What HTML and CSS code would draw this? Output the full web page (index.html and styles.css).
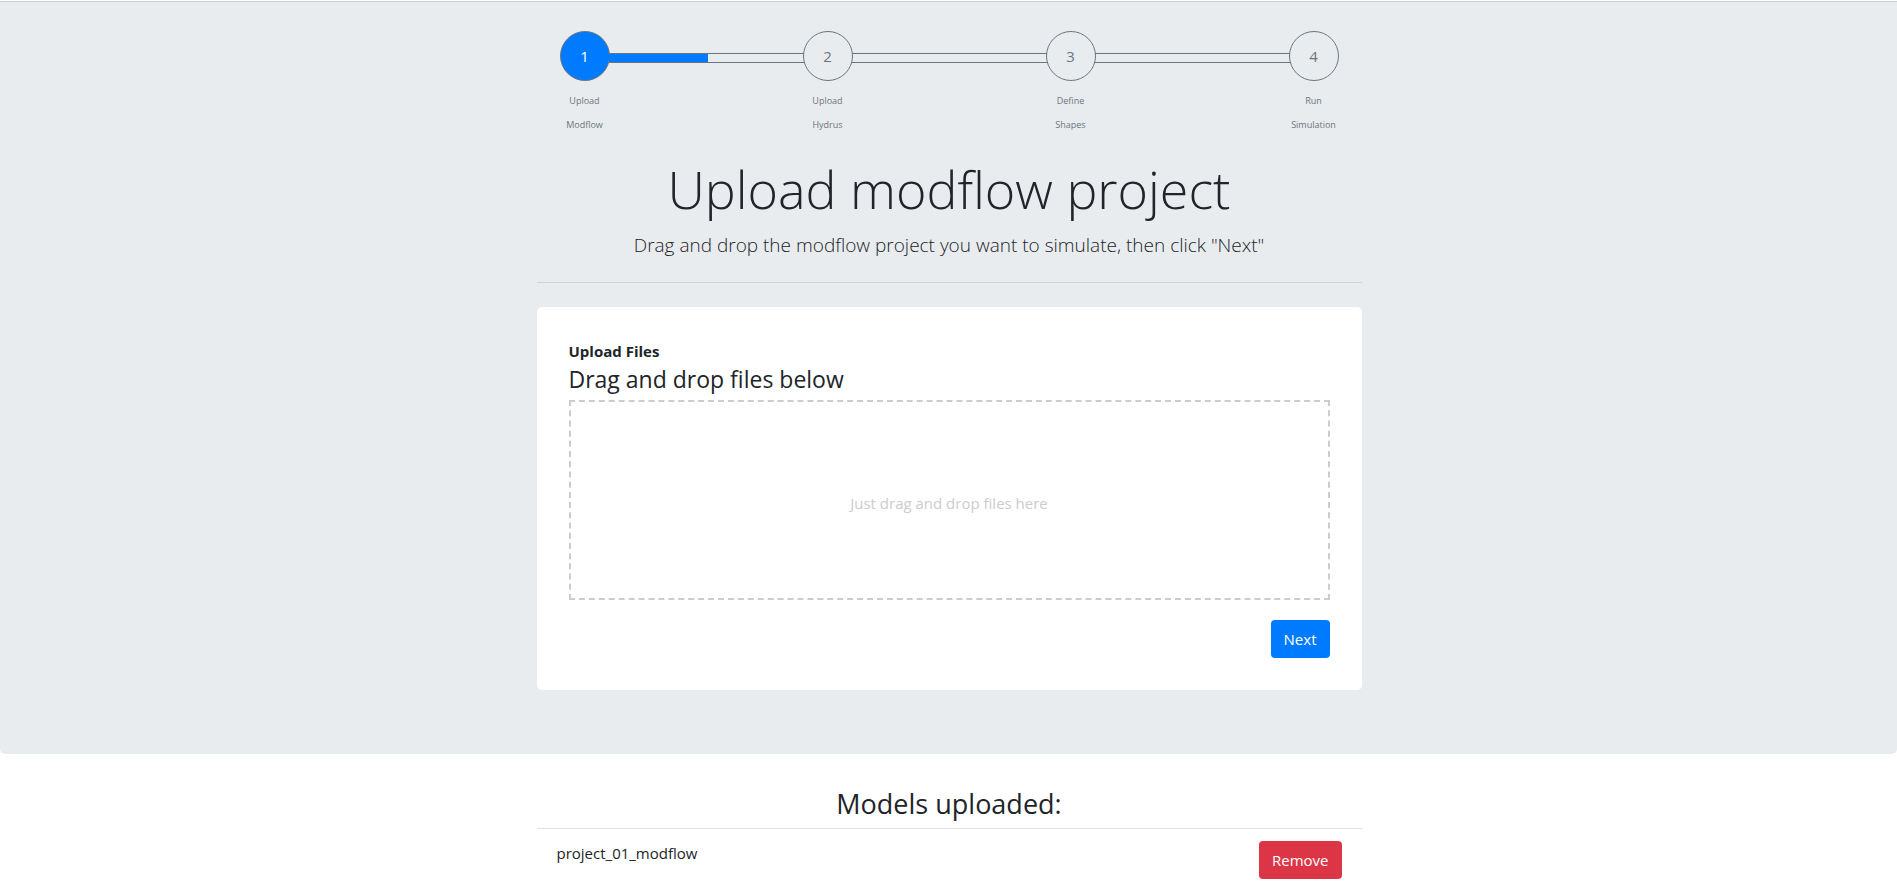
FILE: index.html
```html
<!DOCTYPE html>
<html lang="en">
<head>
<meta charset="utf-8">
<meta name="viewport" content="width=device-width, initial-scale=1">
<title>Upload modflow project</title>
<link rel="stylesheet" href="styles.css">
</head>
<body>
<main>
  <section class="jumbotron">
    <div class="container">
      <ol class="steps">
        <li class="step step-active"><span class="circle">1</span><span class="label">Upload</span><span class="label">Modflow</span></li>
        <li class="bar" aria-hidden="true"><div class="bar-fill" style="width: 51%"></div></li>
        <li class="step"><span class="circle">2</span><span class="label">Upload</span><span class="label">Hydrus</span></li>
        <li class="bar" aria-hidden="true"></li>
        <li class="step"><span class="circle">3</span><span class="label">Define</span><span class="label">Shapes</span></li>
        <li class="bar" aria-hidden="true"></li>
        <li class="step"><span class="circle">4</span><span class="label">Run</span><span class="label">Simulation</span></li>
      </ol>
      <h1 class="title">Upload modflow project</h1>
      <p class="lead">Drag and drop the modflow project you want to simulate, then click "Next"</p>
      <hr class="divider">
      <div class="card">
        <div class="card-name">Upload Files</div>
        <h2 class="card-title">Drag and drop files below</h2>
        <div class="dropzone">Just drag and drop files here</div>
        <div class="actions"><button class="btn btn-primary" type="button">Next</button></div>
      </div>
    </div>
  </section>
  <section class="models">
    <div class="container">
      <h2 class="models-title">Models uploaded:</h2>
      <ul class="model-list">
        <li class="model">
          <span class="model-name">project_01_modflow</span>
          <button class="btn btn-danger" type="button">Remove</button>
        </li>
      </ul>
    </div>
  </section>
</main>
</body>
</html>
```
FILE: styles.css
```css
* { box-sizing: border-box; }
body {
  margin: 0;
  padding-top: 1px;
  background: #fff;
  color: #212529;
  font: 400 15px/24px "Segoe UI", "Open Sans", "Noto Sans", sans-serif;
}
.container {
  width: 100%;
  max-width: 825px;
  margin: 0 auto;
}
.jumbotron {
  padding: 29px 0 64px 1px;
  border-top: 1px solid #ccc;
  border-radius: 0 0 5px 5px;
  background: #e9ecef;
}
.steps {
  display: flex;
  align-items: flex-start;
  margin: 0;
  padding: 0 23px;
  list-style: none;
  color: #6c757d;
}
.step {
  display: flex;
  flex-direction: column;
  align-items: center;
  width: 50px;
}
.circle {
  width: 50px;
  height: 50px;
  margin-bottom: 8px;
  border: 1px solid #6c757d;
  border-radius: 50%;
  line-height: 48px;
  text-align: center;
}
.step-active .circle {
  background: #007bff;
  color: #fff;
}
.label {
  font-size: 9px;
  line-height: 24px;
}
.bar {
  flex: 1;
  height: 10px;
  margin: 22px -1px 0;
  border: solid #6c757d;
  border-width: 1px 0;
}
.bar-fill {
  height: 100%;
  background: #007bff;
}
.title {
  margin: 18px 0 7px;
  font-size: 52px;
  font-weight: 300;
  line-height: 68px;
  text-align: center;
}
.lead {
  margin: 0;
  font-size: 19px;
  font-weight: 300;
  line-height: 30px;
  text-align: center;
}
.divider {
  margin: 22px 0 24px;
  border: 0;
  border-top: 1px solid #d0d3d6;
}
.card {
  padding: 32px;
  border-radius: 5px;
  background: #fff;
}
.card-name { font-weight: 700; }
.card-title {
  margin: 0 0 5px;
  font-size: 23px;
  font-weight: 400;
  line-height: 32px;
}
.dropzone {
  display: flex;
  align-items: center;
  justify-content: center;
  height: 200px;
  padding-top: 6px;
  border: 2px dashed #ccc;
  color: #ccc;
}
.actions {
  display: flex;
  justify-content: flex-end;
  margin-top: 20px;
}
.btn {
  padding: 6px 12px;
  border: 1px solid transparent;
  border-radius: 4px;
  color: #fff;
  font: inherit;
  cursor: pointer;
}
.btn-primary { background: #007bff; }
.btn-danger { background: #dc3545; }
.models { padding: 33px 0 0 1px; }
.models-title {
  margin: 0;
  padding-bottom: 7px;
  border-bottom: 1px solid #dee2e6;
  font-size: 27px;
  font-weight: 400;
  line-height: 34px;
  text-align: center;
}
.model-list {
  margin: 0;
  padding: 0;
  list-style: none;
}
.model {
  display: flex;
  align-items: flex-start;
  justify-content: space-between;
  padding: 12px 20px 0;
}
```
